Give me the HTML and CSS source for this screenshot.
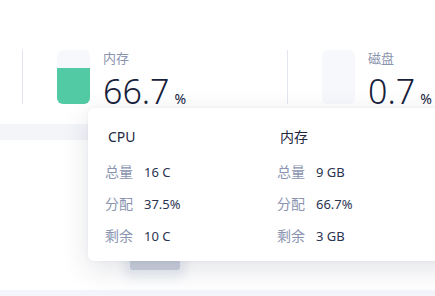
FILE: index.html
```html
<!DOCTYPE html>
<html lang="zh">
<head>
<meta charset="utf-8">
<link rel="stylesheet" href="styles.css">
</head>
<body>
<div class="page">
  <section class="stats">
    <div class="stat">
      <div class="gauge"><div class="gauge-fill" style="height:66.7%"></div></div>
      <div class="stat-text">
        <div class="stat-label">内存</div>
        <div class="stat-value">66.7<span class="unit">%</span></div>
      </div>
    </div>
    <div class="stat">
      <div class="gauge"><div class="gauge-fill" style="height:0.7%"></div></div>
      <div class="stat-text">
        <div class="stat-label">磁盘</div>
        <div class="stat-value">0.7<span class="unit">%</span></div>
      </div>
    </div>
  </section>
  <div class="gap-band"></div>
  <section class="panel">
    <div class="handle"></div>
  </section>
  <div class="bottom-band"></div>

  <div class="popover">
    <div class="pop-col">
      <div class="pop-title">CPU</div>
      <div class="pop-row"><span class="k">总量</span><span class="v">16 C</span></div>
      <div class="pop-row"><span class="k">分配</span><span class="v">37.5%</span></div>
      <div class="pop-row"><span class="k">剩余</span><span class="v">10 C</span></div>
    </div>
    <div class="pop-col">
      <div class="pop-title">内存</div>
      <div class="pop-row"><span class="k">总量</span><span class="v">9 GB</span></div>
      <div class="pop-row"><span class="k">分配</span><span class="v">66.7%</span></div>
      <div class="pop-row"><span class="k">剩余</span><span class="v">3 GB</span></div>
    </div>
  </div>
</div>
</body>
</html>
```

FILE: styles.css
```css
* { box-sizing: border-box; }
html, body {
  margin: 0;
  padding: 0;
  width: 435px;
  height: 296px;
  overflow: hidden;
  background: #ffffff;
  font-family: "Noto Sans", "Noto Sans CJK SC", sans-serif;
}
.page {
  position: relative;
  width: 435px;
  height: 296px;
  overflow: hidden;
  display: flex;
  flex-direction: column;
}
.stats {
  height: 124px;
  flex-shrink: 0;
  display: flex;
  padding: 50px 0 0 22px;
  background: #ffffff;
  box-shadow: 0 1px 2px rgba(30, 40, 70, 0.04);
}
.stat {
  width: 265px;
  flex-shrink: 0;
  height: 54px;
  display: flex;
  gap: 13px;
  padding-left: 34px;
  border-left: 1px solid #e2e6ee;
}
.gauge {
  width: 33px;
  height: 54px;
  border-radius: 6px;
  background: #f6f8fc;
  overflow: hidden;
  display: flex;
  flex-direction: column;
  justify-content: flex-end;
  flex-shrink: 0;
}
.gauge-fill {
  background: #52cba5;
  width: 100%;
}
.stat-text {
  display: flex;
  flex-direction: column;
}
.stat-label {
  font-size: 13px;
  line-height: 16px;
  color: #8b94ae;
}
.stat-value {
  margin-top: 5px;
  font-size: 34px;
  font-weight: 300;
  line-height: 40px;
  color: #17213b;
  white-space: nowrap;
}
.unit {
  font-size: 14px;
  font-weight: 400;
  margin-left: 5px;
  color: #17213b;
}
.gap-band {
  height: 16px;
  flex-shrink: 0;
  background: #f3f5f9;
}
.panel {
  height: 150px;
  flex-shrink: 0;
  background: #ffffff;
  position: relative;
}
.handle {
  position: absolute;
  left: 130px;
  top: 115px;
  width: 50px;
  height: 15px;
  background: #c9cfdb;
  border-radius: 0 0 3px 3px;
  box-shadow: 0 2px 10px 6px rgba(225, 229, 238, 0.7);
}
.bottom-band {
  flex: 1;
  background: #f3f5fa;
}
.popover {
  position: absolute;
  left: 88px;
  top: 108px;
  width: 380px;
  height: 153px;
  background: #ffffff;
  border-radius: 6px;
  box-shadow: 0 8px 28px rgba(30, 40, 70, 0.13), 0 0 4px rgba(30, 40, 70, 0.04);
  display: grid;
  grid-template-columns: 172px 172px;
  padding: 19px 0 0 17px;
}
.pop-col {
  display: flex;
  flex-direction: column;
  gap: 12px;
}
.pop-title {
  font-size: 14px;
  line-height: 20px;
  color: #1e2740;
  padding-left: 3px;
  margin-bottom: 3px;
}
.pop-row {
  display: flex;
  gap: 11px;
  line-height: 20px;
  white-space: nowrap;
}
.k { color: #8a94b0; font-size: 14px; }
.v { color: #2a3350; font-size: 13px; }
```
